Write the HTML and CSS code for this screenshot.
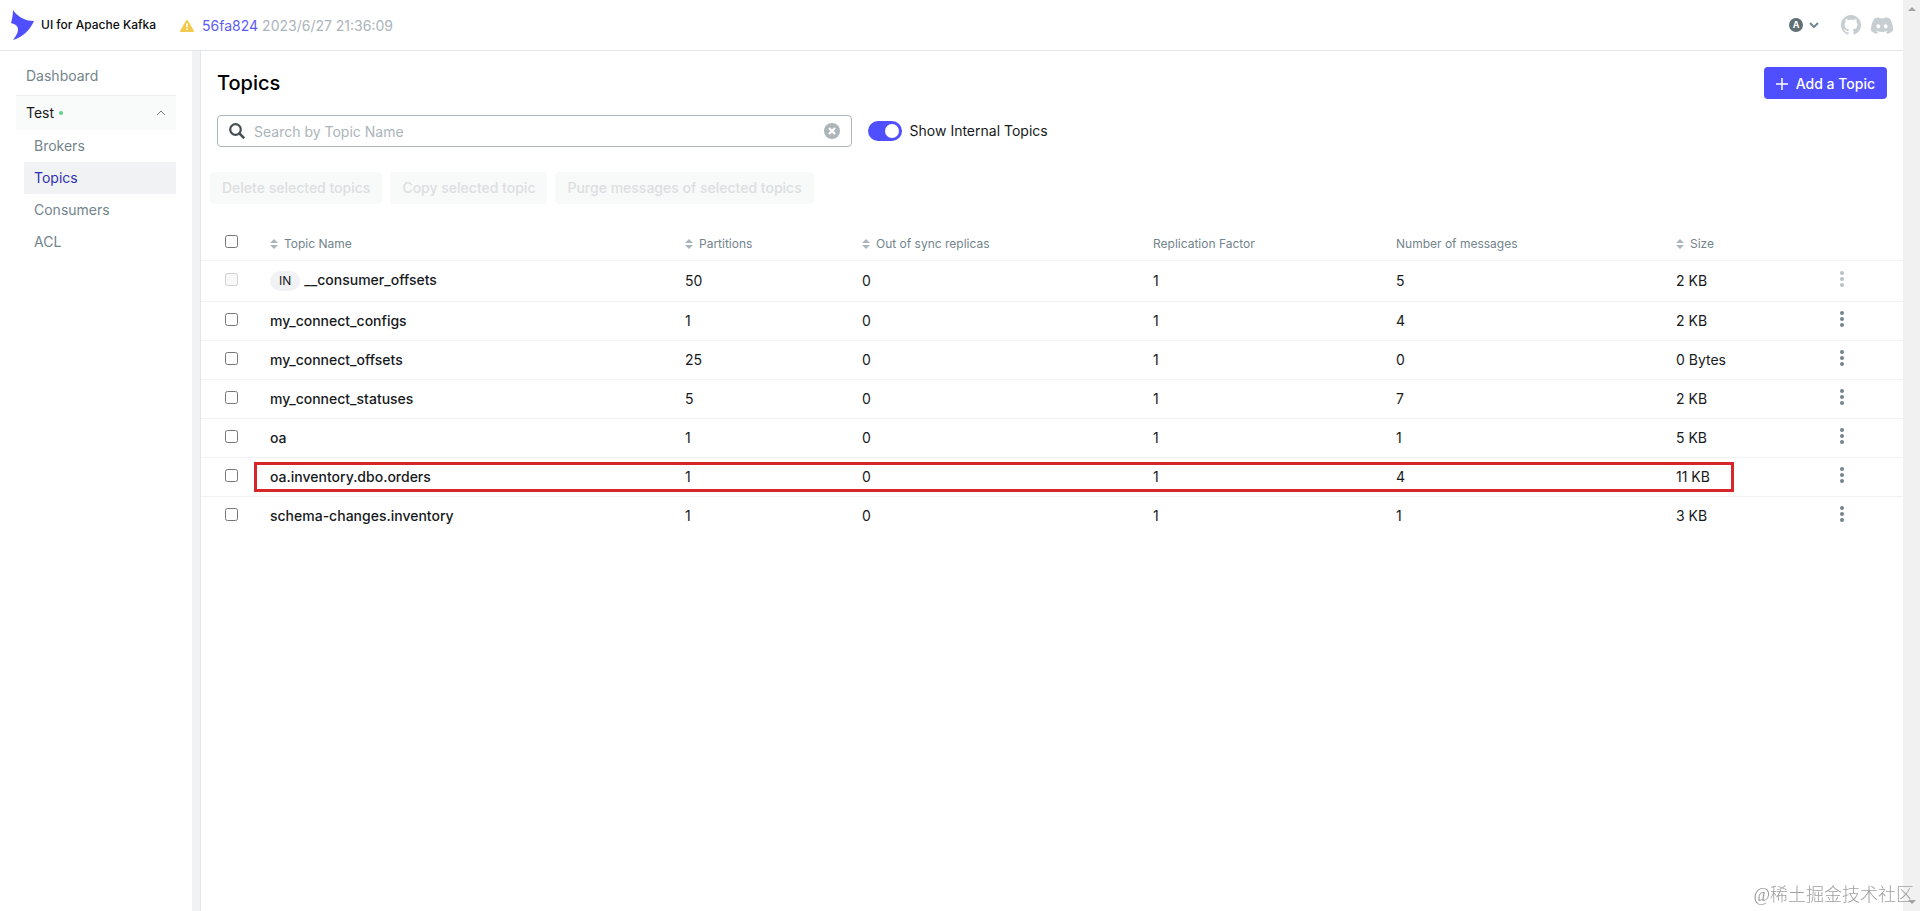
FILE: index.html
```html
<!DOCTYPE html>
<html lang="en">
<head>
    <meta charset="UTF-8">
    <meta name="viewport" content="width=device-width, initial-scale=1.0">
    <title>UI for Apache Kafka</title>
    <link rel="stylesheet" href="styles.css">
</head>
<body>
    <svg class="sprite" aria-hidden="true">
        <symbol id="sort" viewBox="0 0 8 10">
            <path d="M4 0L8 4H0Z M4 10L0 6H8Z"/>
        </symbol>
        <symbol id="dots" viewBox="0 0 4 16">
            <circle cx="2" cy="2" r="2"/>
            <circle cx="2" cy="8" r="2"/>
            <circle cx="2" cy="14" r="2"/>
        </symbol>
    </svg>

    <div class="app">
        <header class="navbar">
            <a class="brand" href="#">
                <svg class="logo" viewBox="0 0 23 30">
                    <path d="M2 0C6 6 13 11 23 11C19 20 12 27 2 30C6 25 7 22 7 19C7 16 4 14 0 13C1 9 2 5 2 0Z"/>
                </svg>
                <span>UI for Apache Kafka</span>
            </a>
            <div class="version">
                <svg class="warning" viewBox="0 0 14 12">
                    <path fill="#f2c94c" d="M6.1 0.5Q7 -0.5 7.9 0.5L13.8 10.5Q14.2 12 13 12H1Q-0.2 12 0.2 10.5Z"/>
                    <path fill="#fff" d="M6.2 3.4H7.8L7.6 7.6H6.4ZM6.2 8.5H7.8V10.1H6.2Z"/>
                </svg>
                <a href="#">56fa824</a>
                <span>2023/6/27 21:36:09</span>
            </div>
            <div class="nav-tools">
                <button class="user" aria-label="User menu">
                    <span class="avatar">A</span>
                    <svg width="10" height="6" viewBox="0 0 10 6"><path d="M1 1L5 5L9 1" fill="none" stroke="#73848c" stroke-width="2"/></svg>
                </button>
                <a class="social" href="#" aria-label="GitHub">
                    <svg width="20" height="20" viewBox="0 0 16 16"><path d="M8 0C3.58 0 0 3.58 0 8c0 3.54 2.29 6.53 5.47 7.59.4.07.55-.17.55-.38 0-.19-.01-.82-.01-1.49-2.01.37-2.53-.49-2.69-.94-.09-.23-.48-.94-.82-1.13-.28-.15-.68-.52-.01-.53.63-.01 1.08.58 1.23.82.72 1.21 1.87.87 2.33.66.07-.52.28-.87.51-1.07-1.78-.2-3.64-.89-3.64-3.95 0-.87.31-1.59.82-2.15-.08-.2-.36-1.02.08-2.12 0 0 .67-.21 2.2.82.64-.18 1.32-.27 2-.27s1.36.09 2 .27c1.53-1.04 2.2-.82 2.2-.82.44 1.1.16 1.92.08 2.12.51.56.82 1.27.82 2.15 0 3.07-1.87 3.75-3.65 3.95.29.25.54.73.54 1.48 0 1.07-.01 1.93-.01 2.2 0 .21.15.46.55.38A8.01 8.01 0 0016 8c0-4.42-3.58-8-8-8z"/></svg>
                </a>
                <a class="social" href="#" aria-label="Discord">
                    <svg width="22" height="17" viewBox="0 0 127 96"><path d="M107.7 8.07A105.15 105.15 0 0081.47 0a72.06 72.06 0 00-3.36 6.83 97.68 97.68 0 00-29.11 0A72.37 72.37 0 0045.64 0a105.89 105.89 0 00-26.25 8.09C2.79 32.65-1.71 56.6.54 80.21a105.73 105.73 0 0032.17 16.15 77.7 77.7 0 006.89-11.11 68.42 68.42 0 01-10.85-5.18c.91-.66 1.8-1.34 2.66-2a75.57 75.57 0 0064.32 0c.87.71 1.76 1.39 2.66 2a68.68 68.68 0 01-10.87 5.19 77 77 0 006.89 11.1 105.25 105.25 0 0032.19-16.14c2.64-27.38-4.51-51.11-18.9-72.15zM42.45 65.69C36.18 65.69 31 60 31 53s5-12.74 11.43-12.74S54 46 53.89 53s-5.05 12.69-11.44 12.69zm42.24 0C78.41 65.69 73.25 60 73.25 53s5-12.74 11.44-12.74S96.23 46 96.12 53s-5.04 12.69-11.43 12.69z"/></svg>
                </a>
            </div>
        </header>

        <div class="layout">
            <nav class="sidebar">
                <a class="menu-item" href="#">Dashboard</a>
                <button class="cluster" aria-expanded="true">
                    <span>Test</span>
                    <i class="status"></i>
                    <svg width="10" height="6" viewBox="0 0 10 6"><path d="M1 5L5 1L9 5" fill="none" stroke="#73848c"/></svg>
                </button>
                <ul class="submenu">
                    <li><a href="#">Brokers</a></li>
                    <li><a class="active" href="#">Topics</a></li>
                    <li><a href="#">Consumers</a></li>
                    <li><a href="#">ACL</a></li>
                </ul>
            </nav>

            <main class="content">
                <div class="heading">
                    <h1>Topics</h1>
                    <button class="btn-primary">
                        <svg width="12" height="12" viewBox="0 0 12 12"><path d="M6 0V12M0 6H12" stroke="#fff" stroke-width="1.5"/></svg>
                        Add a Topic
                    </button>
                </div>

                <div class="controls">
                    <div class="search">
                        <svg width="16" height="16" viewBox="0 0 16 16"><circle cx="6.5" cy="6.5" r="5.3" fill="none" stroke="#454f54" stroke-width="2.2"/><path d="M10.4 10.4L15.2 15.2" stroke="#454f54" stroke-width="2.6"/></svg>
                        <input type="text" placeholder="Search by Topic Name" aria-label="Search by Topic Name">
                        <button class="clear" aria-label="Clear search">
                            <svg width="16" height="16" viewBox="0 0 16 16"><circle cx="8" cy="8" r="8" fill="#abb5ba"/><path d="M5 5L11 11M11 5L5 11" stroke="#fff" stroke-width="2.2"/></svg>
                        </button>
                    </div>
                    <label class="switch">
                        <input type="checkbox" checked>
                        <span>Show Internal Topics</span>
                    </label>
                </div>

                <div class="bulk-actions">
                    <button disabled>Delete selected topics</button>
                    <button disabled>Copy selected topic</button>
                    <button disabled>Purge messages of selected topics</button>
                </div>

                <table class="topics">
                    <colgroup>
                        <col class="col-check">
                        <col class="col-name">
                        <col class="col-partitions">
                        <col class="col-replicas">
                        <col class="col-factor">
                        <col class="col-messages">
                        <col class="col-size">
                        <col class="col-menu">
                    </colgroup>
                    <thead>
                        <tr>
                            <th class="check"><input type="checkbox" aria-label="Select all topics"></th>
                            <th><svg class="sort"><use href="#sort"/></svg>Topic Name</th>
                            <th><svg class="sort"><use href="#sort"/></svg>Partitions</th>
                            <th><svg class="sort"><use href="#sort"/></svg>Out of sync replicas</th>
                            <th>Replication Factor</th>
                            <th>Number of messages</th>
                            <th><svg class="sort"><use href="#sort"/></svg>Size</th>
                            <th></th>
                        </tr>
                    </thead>
                    <tbody>
                        <tr class="internal">
                            <td class="check"><input type="checkbox" aria-label="Select __consumer_offsets" disabled></td>
                            <td class="name"><span class="tag">IN</span><a href="#">__consumer_offsets</a></td>
                            <td>50</td>
                            <td>0</td>
                            <td>1</td>
                            <td>5</td>
                            <td>2 KB</td>
                            <td class="menu"><button aria-label="Topic actions" disabled><svg class="dots"><use href="#dots"/></svg></button></td>
                        </tr>
                        <tr>
                            <td class="check"><input type="checkbox" aria-label="Select my_connect_configs"></td>
                            <td class="name"><a href="#">my_connect_configs</a></td>
                            <td>1</td>
                            <td>0</td>
                            <td>1</td>
                            <td>4</td>
                            <td>2 KB</td>
                            <td class="menu"><button aria-label="Topic actions"><svg class="dots"><use href="#dots"/></svg></button></td>
                        </tr>
                        <tr>
                            <td class="check"><input type="checkbox" aria-label="Select my_connect_offsets"></td>
                            <td class="name"><a href="#">my_connect_offsets</a></td>
                            <td>25</td>
                            <td>0</td>
                            <td>1</td>
                            <td>0</td>
                            <td>0 Bytes</td>
                            <td class="menu"><button aria-label="Topic actions"><svg class="dots"><use href="#dots"/></svg></button></td>
                        </tr>
                        <tr>
                            <td class="check"><input type="checkbox" aria-label="Select my_connect_statuses"></td>
                            <td class="name"><a href="#">my_connect_statuses</a></td>
                            <td>5</td>
                            <td>0</td>
                            <td>1</td>
                            <td>7</td>
                            <td>2 KB</td>
                            <td class="menu"><button aria-label="Topic actions"><svg class="dots"><use href="#dots"/></svg></button></td>
                        </tr>
                        <tr>
                            <td class="check"><input type="checkbox" aria-label="Select oa"></td>
                            <td class="name"><a href="#">oa</a></td>
                            <td>1</td>
                            <td>0</td>
                            <td>1</td>
                            <td>1</td>
                            <td>5 KB</td>
                            <td class="menu"><button aria-label="Topic actions"><svg class="dots"><use href="#dots"/></svg></button></td>
                        </tr>
                        <tr class="marked">
                            <td class="check"><input type="checkbox" aria-label="Select oa.inventory.dbo.orders"><span class="marker"></span></td>
                            <td class="name"><a href="#">oa.inventory.dbo.orders</a></td>
                            <td>1</td>
                            <td>0</td>
                            <td>1</td>
                            <td>4</td>
                            <td>11 KB</td>
                            <td class="menu"><button aria-label="Topic actions"><svg class="dots"><use href="#dots"/></svg></button></td>
                        </tr>
                        <tr>
                            <td class="check"><input type="checkbox" aria-label="Select schema-changes.inventory"></td>
                            <td class="name"><a href="#">schema-changes.inventory</a></td>
                            <td>1</td>
                            <td>0</td>
                            <td>1</td>
                            <td>1</td>
                            <td>3 KB</td>
                            <td class="menu"><button aria-label="Topic actions"><svg class="dots"><use href="#dots"/></svg></button></td>
                        </tr>
                    </tbody>
                </table>
            </main>
        </div>
    </div>

    <div class="scrollbar" aria-hidden="true">
        <svg width="8" height="4" viewBox="0 0 8 4"><path d="M4 0L8 4H0Z"/></svg>
        <svg width="8" height="4" viewBox="0 0 8 4"><path d="M4 4L0 0H8Z"/></svg>
    </div>

    <div class="watermark">@稀土掘金技术社区</div>
</body>
</html>
```
FILE: styles.css
```css
* {
    margin: 0;
    padding: 0;
    box-sizing: border-box;
}

body {
    display: flex;
    min-height: 100vh;
    background: #fff;
    font-family: Inter, "Noto Sans CJK SC", sans-serif;
    font-size: 14px;
    line-height: 20px;
    color: #171a1c;
}

a {
    color: inherit;
    text-decoration: none;
}

button {
    border: none;
    background: none;
    font: inherit;
    color: inherit;
    cursor: pointer;
}

.sprite {
    position: absolute;
    width: 0;
    height: 0;
}

.app {
    flex: 1;
    display: flex;
    flex-direction: column;
    min-width: 0;
}

/* top bar */
.navbar {
    display: flex;
    align-items: center;
    height: 51px;
    padding: 0 10px 0 11px;
    border-bottom: 1px solid #e3e6e8;
}

.brand {
    display: flex;
    align-items: center;
    gap: 7px;
    font-size: 12px;
    font-weight: 500;
    color: #0b0d0e;
}

.logo {
    width: 23px;
    height: 30px;
    fill: #4f4fff;
}

.version {
    display: flex;
    align-items: center;
    gap: 4px;
    margin-left: 24px;
    padding-top: 1px;
    color: #abb5ba;
}

.version a {
    color: #5c5cf5;
}

.warning {
    width: 14px;
    height: 12px;
    margin-right: 4px;
}

.nav-tools {
    display: flex;
    align-items: center;
    gap: 10px;
    margin-left: auto;
}

.user {
    display: flex;
    align-items: center;
    gap: 6px;
    margin-right: 12px;
}

.avatar {
    width: 14px;
    height: 14px;
    border-radius: 50%;
    background: #5f6f73;
    color: #fff;
    font-size: 9px;
    font-weight: 700;
    line-height: 14px;
    text-align: center;
}

.social {
    display: flex;
    fill: #c7ced1;
}

/* side menu */
.layout {
    flex: 1;
    display: flex;
}

.sidebar {
    width: 201px;
    padding: 8px 16px;
    border-right: 1px solid #e3e6e8;
    box-shadow: inset -8px 0 #f1f2f3;
    flex: none;
    color: #73848c;
}

.menu-item {
    display: block;
    width: 160px;
    padding: 7px 10px 9px;
}

.cluster {
    display: flex;
    align-items: center;
    width: 160px;
    height: 35px;
    padding: 0 10px;
    border-top: 1px solid #eceeef;
    background: #f9fafa;
    color: #171a1c;
}

.cluster svg {
    margin-left: auto;
}

.status {
    width: 4px;
    height: 4px;
    margin-left: 5px;
    border-radius: 50%;
    background: #5cd685;
}

.submenu {
    width: 152px;
    margin-left: 8px;
    list-style: none;
}

.submenu a {
    display: block;
    padding: 6px 10px;
}

.submenu .active {
    background: #f1f2f3;
    color: #2f2fb5;
}

/* page */
.content {
    flex: 1;
    min-width: 0;
}

.heading {
    display: flex;
    align-items: center;
    justify-content: space-between;
    height: 64px;
    padding: 0 16px;
}

.heading h1 {
    font-size: 20px;
    font-weight: 500;
    line-height: 24px;
    color: #000;
}

.btn-primary {
    display: flex;
    align-items: center;
    gap: 8px;
    height: 32px;
    padding: 1px 12px 0;
    border-radius: 4px;
    background: #4f4fff;
    color: #fff;
    font-weight: 500;
}

.controls {
    display: flex;
    align-items: center;
    gap: 16px;
    padding: 0 16px;
}

.search {
    display: flex;
    align-items: center;
    gap: 9px;
    width: 38%;
    height: 32px;
    padding: 0 11px;
    border: 1px solid #abb5ba;
    border-radius: 4px;
}

.search input {
    flex: 1;
    min-width: 0;
    padding-top: 2px;
    border: none;
    outline: none;
    font: inherit;
}

.search input::placeholder {
    color: #abb5ba;
}

.clear {
    display: flex;
}

.switch {
    display: flex;
    align-items: center;
    gap: 8px;
}

.switch input {
    appearance: none;
    width: 34px;
    height: 20px;
    border-radius: 10px;
    background: #4f4fff;
}

.switch input::before {
    content: "";
    display: block;
    width: 14px;
    height: 14px;
    margin: 3px 3px 3px 17px;
    border-radius: 50%;
    background: #fff;
}

.bulk-actions {
    display: flex;
    gap: 8px;
    padding: 25px 9px 0;
}

.bulk-actions button {
    height: 32px;
    padding: 0 12px;
    border-radius: 4px;
    background: #f8f9f9;
    color: #dcdfe1;
    font-weight: 500;
}

/* topics table */
.topics {
    width: 100%;
    margin-top: 24px;
    border-collapse: collapse;
    table-layout: fixed;
}

.col-check { width: 45px; }
.col-name { width: 415px; }
.col-partitions { width: 177px; }
.col-replicas { width: 291px; }
.col-factor { width: 243px; }
.col-messages { width: 280px; }
.col-size { width: 160px; }
.col-menu { width: 91px; }

.topics th,
.topics td {
    padding: 0 24px;
    border-bottom: 1px solid #f1f2f3;
    text-align: left;
    white-space: nowrap;
}

.topics th {
    height: 32px;
    font-size: 12px;
    font-weight: 400;
    color: #73848c;
}

.topics td {
    height: 39px;
}

.topics .internal td {
    height: 41px;
}

.topics tr:last-child td {
    border-bottom: none;
}

.topics th.check {
    padding: 0 0 4px 24px;
}

.topics td.check {
    padding: 0 0 2px 24px;
}

.check input {
    display: block;
    width: 13px;
    height: 13px;
}

.sort {
    width: 8px;
    height: 10px;
    margin-right: 6px;
    fill: #abb5ba;
    vertical-align: -1px;
}

.topics .name {
    font-weight: 500;
}

.tag {
    display: inline-block;
    margin-right: 4px;
    padding: 0 9px;
    border-radius: 10px;
    background: #f1f2f3;
    font-size: 12px;
    font-weight: 400;
}

.topics .menu {
    padding-bottom: 4px;
}

.menu button {
    display: block;
    padding: 0 4px;
}

.menu button:disabled {
    opacity: 0.5;
}

.dots {
    display: block;
    width: 4px;
    height: 16px;
    fill: #73848c;
}

.marked {
    position: relative;
}

.marker {
    position: absolute;
    top: 5px;
    right: 169px;
    bottom: 4px;
    left: 53px;
    border: 3px solid #d6252b;
    pointer-events: none;
}

.scrollbar {
    display: flex;
    flex-direction: column;
    align-items: center;
    justify-content: space-between;
    width: 17px;
    padding: 7px 0;
    background: #f1f1f1;
    fill: #a3a3a3;
}

.watermark {
    position: fixed;
    right: 6px;
    bottom: 3px;
    color: #a0a0a0;
    font-family: "Liberation Serif", "Noto Sans CJK SC", serif;
    font-size: 18px;
    font-weight: 300;
    line-height: 26px;
}
```
